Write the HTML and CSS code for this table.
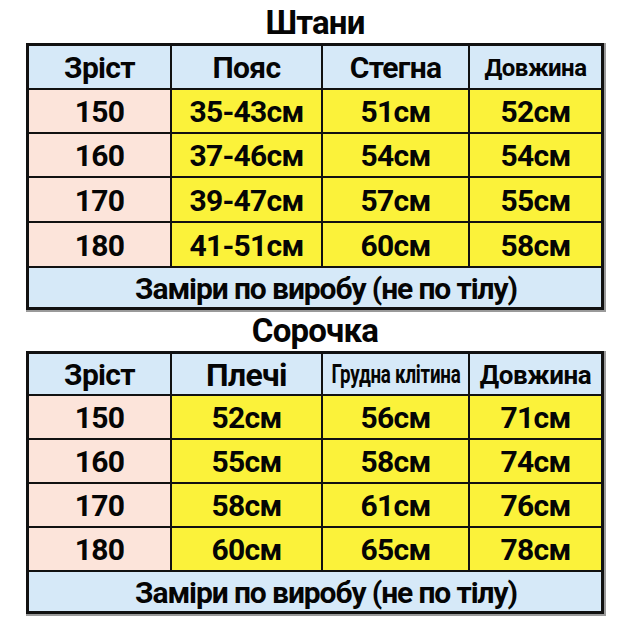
FILE: index.html
```html
<!DOCTYPE html>
<html lang="uk">
<head>
<meta charset="utf-8">
<title>Розміри</title>
<link rel="stylesheet" href="styles.css">
</head>
<body>
<div class="page">
  <h2 class="title t1">Штани</h2>
  <div class="grid g1">
    <div class="c hd">Зріст</div>
    <div class="c hd">Пояс</div>
    <div class="c hd">Стегна</div>
    <div class="c hd small1">Довжина</div>

    <div class="c h">150</div><div class="c y">35-43см</div><div class="c y">51см</div><div class="c y">52см</div>
    <div class="c h">160</div><div class="c y">37-46см</div><div class="c y">54см</div><div class="c y">54см</div>
    <div class="c h">170</div><div class="c y">39-47см</div><div class="c y">57см</div><div class="c y">55см</div>
    <div class="c h">180</div><div class="c y">41-51см</div><div class="c y">60см</div><div class="c y">58см</div>
    <div class="c ft">Заміри по виробу (не по тілу)</div>
  </div>

  <h2 class="title t2">Сорочка</h2>
  <div class="grid g2">
    <div class="c hd">Зріст</div>
    <div class="c hd big">Плечі</div>
    <div class="c hd"><span class="narrow">Грудна клітина</span></div>
    <div class="c hd small2">Довжина</div>

    <div class="c h">150</div><div class="c y">52см</div><div class="c y">56см</div><div class="c y">71см</div>
    <div class="c h">160</div><div class="c y">55см</div><div class="c y">58см</div><div class="c y">74см</div>
    <div class="c h">170</div><div class="c y">58см</div><div class="c y">61см</div><div class="c y">76см</div>
    <div class="c h">180</div><div class="c y">60см</div><div class="c y">65см</div><div class="c y">78см</div>
    <div class="c ft">Заміри по виробу (не по тілу)</div>
  </div>
</div>
</body>
</html>
```

FILE: styles.css
```css
html, body {
  margin: 0;
  padding: 0;
  background: #ffffff;
}

.page {
  width: 630px;
  height: 630px;
  display: flex;
  flex-direction: column;
  align-items: flex-start;
  padding-left: 26px;
  box-sizing: border-box;
  font-family: Roboto, "Liberation Sans", sans-serif;
  font-weight: 700;
  color: #050505;
}

.title {
  margin: 0;
  width: 578px;
  text-align: center;
  font-size: 33px;
  font-weight: 700;
  letter-spacing: -0.8px;
}

.t1 {
  height: 43px;
  line-height: 46px;
}

.t2 {
  height: 41px;
  line-height: 42px;
}

.grid {
  display: grid;
  grid-template-columns: 141px 149px 145px 131px;
  gap: 2px;
  background: #111;
  border: 3px solid #111;
  box-shadow: 1px 1px 0 1px #9a9a9a;
  box-sizing: border-box;
  width: 578px;
}

.g1 {
  grid-template-rows: 42px 42px 42px 43px 43px 39px;
}

.g2 {
  grid-template-rows: 40px 42px 42px 42px 42px 39px;
}

.c {
  display: flex;
  align-items: center;
  justify-content: center;
  padding-top: 1px;
  font-size: 30px;
  letter-spacing: -0.7px;
  white-space: nowrap;
}

.hd {
  background: #d6e9f8;
}

.h {
  background: #fce4da;
}

.y {
  background: #fbf23a;
}

.ft {
  grid-column: 1 / -1;
  background: #d6e9f8;
  letter-spacing: -1.1px;
  padding-left: 22px;
}

.small1 {
  font-size: 24px;
  letter-spacing: -0.5px;
}

.small2 {
  font-size: 26px;
  letter-spacing: -0.4px;
}

.big {
  font-size: 32px;
}

.narrow {
  display: inline-block;
  font-size: 25px;
  letter-spacing: -0.3px;
  transform: scaleX(0.75);
}
```
